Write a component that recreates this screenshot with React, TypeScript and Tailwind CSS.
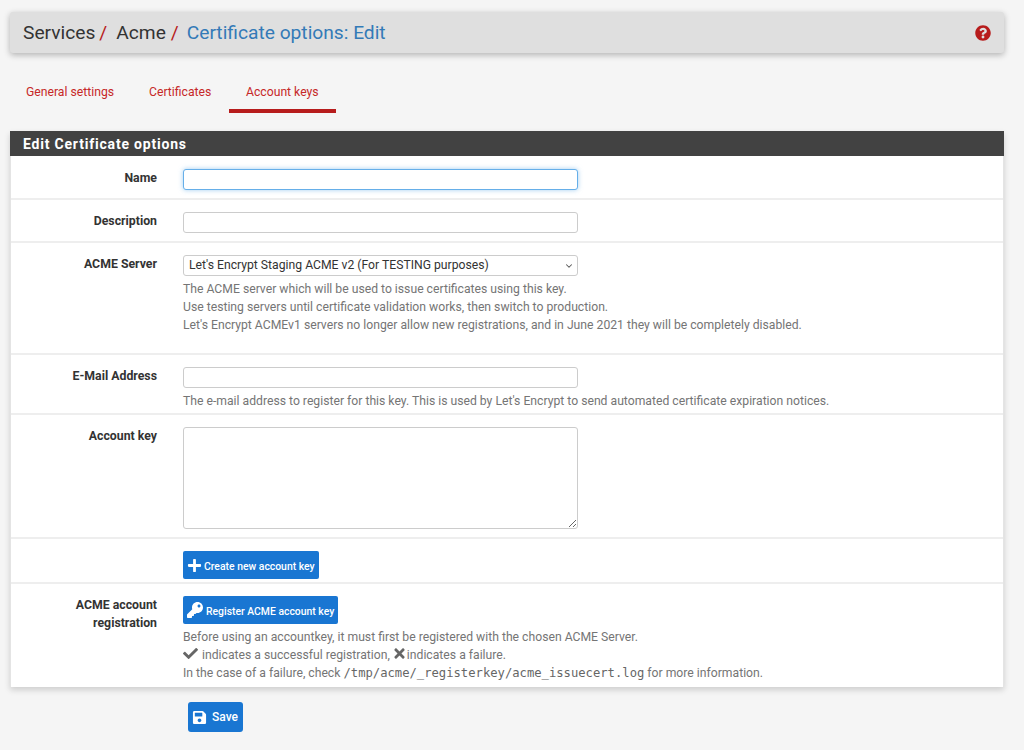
import React from 'react';
import { FaCheck, FaKey, FaPlus, FaQuestionCircle, FaSave, FaTimes } from 'react-icons/fa';
import { ChevronDown } from 'lucide-react';

interface RowProps {
  label?: React.ReactNode;
  className: string;
  children: React.ReactNode;
}

// One form row: right aligned bold label, control column next to it
const Row: React.FC<RowProps> = ({ label, className, children }) => (
  <div className={`flex border-b-2 border-[#eeeeee] last:border-b-0 ${className}`}>
    <div className="w-[146px] shrink-0 text-right text-[12.3px] leading-[18px] font-bold text-[#333333]">{label}</div>
    <div className="ml-[26px] min-w-0 flex-1">{children}</div>
  </div>
);

const Help: React.FC<{ children: React.ReactNode }> = ({ children }) => (
  <div className="text-[12.2px] leading-[18px] text-[#757575]">{children}</div>
);

const inputClass = 'block h-[21px] w-[395px] rounded-[3px] border border-[#cccccc] bg-white outline-none';

export default function App() {
  return (
    <div className="h-[750px] overflow-hidden bg-[#f5f5f5] pt-[12px] pr-[20px] pl-[10px] font-['Roboto',sans-serif]">
      {/* Breadcrumb bar */}
      <div className="flex h-[41px] items-center justify-between rounded-[3px] bg-[#dfdfdf] px-[13px] shadow-[0_2px_6px_rgba(0,0,0,0.28)]">
        <div className="flex items-center text-[19.2px] leading-[24px] text-[#333333]">
          <span>Services</span>
          <span className="ml-[4px] text-[#b71c1c]">/</span>
          <span className="ml-[9px]">Acme</span>
          <span className="ml-[5px] text-[#b71c1c]">/</span>
          <span className="ml-[8px] text-[#337ab7]">Certificate options: Edit</span>
        </div>
        <FaQuestionCircle className="h-[16px] w-[16px] text-[#b71c1c]" />
      </div>

      {/* Tabs */}
      <div className="mt-[26px] flex h-[34px] pt-[1px] text-[12.2px] leading-[24px] text-[#c62828]">
        <div className="w-[122px] pl-[16px]">General settings</div>
        <div className="w-[97px] pl-[17px]">Certificates</div>
        <div className="-mt-[1px] h-[34px] w-[107px] border-b-[4px] border-[#b71c1c] pt-[1px] pl-[17px]">Account keys</div>
      </div>

      {/* Panel */}
      <div className="mt-[18px] border-x border-[#e4e4e4] bg-white shadow-[0_3px_6px_rgba(0,0,0,0.16)]">
        <div className="-mx-px flex h-[25px] items-center bg-[#424242] pt-[1px] pl-[13px] text-[14px] font-bold tracking-[0.8px] text-white">
          Edit Certificate options
        </div>

        <Row label="Name" className="h-[44px] pt-[13px]">
          <input
            type="text"
            className="block h-[21px] w-[395px] rounded-[3px] border border-[#66afe9] bg-white shadow-[0_0_5px_rgba(102,175,233,0.6)] outline-none"
          />
        </Row>

        <Row label="Description" className="h-[43px] pt-[12px]">
          <input type="text" className={inputClass} />
        </Row>

        <Row label="ACME Server" className="h-[112px] pt-[12px]">
          <div className="relative w-[395px]">
            <select className="block h-[21px] w-full appearance-none rounded-[3px] border border-[#cccccc] bg-white pl-[5px] text-[12.2px] text-[#333333] outline-none">
              <option>Let's Encrypt Staging ACME v2 (For TESTING purposes)</option>
            </select>
            <ChevronDown className="pointer-events-none absolute top-[6px] right-[4px] h-[10px] w-[10px] text-[#555555]" strokeWidth={2.5} />
          </div>
          <div className="mt-[4px]">
            <Help>The ACME server which will be used to issue certificates using this key.</Help>
            <Help>Use testing servers until certificate validation works, then switch to production.</Help>
            <Help>Let's Encrypt ACMEv1 servers no longer allow new registrations, and in June 2021 they will be completely disabled.</Help>
          </div>
        </Row>

        <Row label="E-Mail Address" className="h-[60px] pt-[12px]">
          <input type="text" className={inputClass} />
          <div className="mt-[4px]">
            <Help>The e-mail address to register for this key. This is used by Let's Encrypt to send automated certificate expiration notices.</Help>
          </div>
        </Row>

        <Row label="Account key" className="h-[124px] pt-[12px]">
          <textarea className="block h-[102px] w-[395px] rounded-[3px] border border-[#cccccc] bg-white outline-none" />
        </Row>

        <Row className="h-[45px] pt-[12px]">
          <button className="flex h-[28px] w-[136px] items-center rounded-[2px] bg-[#1976d2] pl-[4px] text-[10.4px] font-medium text-white">
            <FaPlus className="mr-[2px] h-[15px] w-[15px]" />
            <span className="pt-[3px]">Create new account key</span>
          </button>
        </Row>

        <Row
          label={
            <>
              ACME account
              <br />
              registration
            </>
          }
          className="h-[103px] pt-[12px]"
        >
          <button className="flex h-[28px] w-[155px] items-center rounded-[2px] bg-[#1976d2] pl-[4px] text-[10.4px] font-medium text-white">
            <FaKey className="mr-[3px] h-[16px] w-[16px]" />
            <span className="pt-[3px]">Register ACME account key</span>
          </button>
          <div className="mt-[4px]">
            <Help>Before using an accountkey, it must first be registered with the chosen ACME Server.</Help>
            <Help>
              <FaCheck className="mr-[4px] inline h-[15px] w-[15px] align-[-2px] text-[#666666]" />
              indicates a successful registration,
              <FaTimes className="ml-[2px] inline h-[15px] w-[15px] align-[-2px] text-[#666666]" />
              indicates a failure.
            </Help>
            <Help>
              In the case of a failure, check{' '}
              <code className="font-['DejaVu_Sans_Mono',monospace] text-[12.2px] text-[#666666]">/tmp/acme/_registerkey/acme_issuecert.log</code>{' '}
              for more information.
            </Help>
          </div>
        </Row>
      </div>

      {/* Save */}
      <button className="mt-[15px] ml-[178px] flex h-[30px] w-[55px] items-center rounded-[3px] bg-[#1976d2] pl-[4px] text-[12px] font-medium text-white">
        <FaSave className="mr-[5px] h-[15px] w-[15px]" />
        Save
      </button>
    </div>
  );
}
